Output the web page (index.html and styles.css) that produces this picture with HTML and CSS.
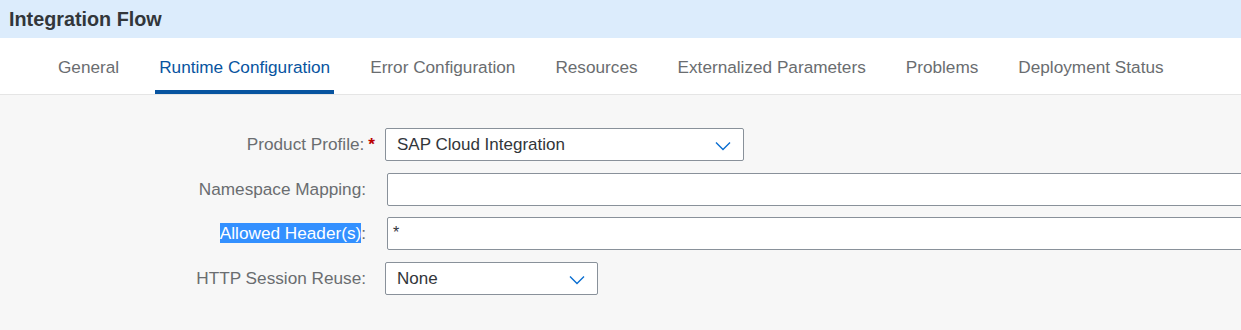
FILE: index.html
```html
<!DOCTYPE html>
<html>
<head>
<meta charset="utf-8">
<link rel="stylesheet" href="styles.css">
</head>
<body>
<div class="page">
  <header class="titlebar"><h1 class="title">Integration Flow</h1></header>
  <nav class="tabs">
    <div class="tab">General</div>
    <div class="tab active">Runtime Configuration</div>
    <div class="tab">Error Configuration</div>
    <div class="tab">Resources</div>
    <div class="tab">Externalized Parameters</div>
    <div class="tab">Problems</div>
    <div class="tab">Deployment Status</div>
  </nav>
  <main class="content">
    <div class="form">
      <label class="lbl req">Product Profile:<span class="star">*</span></label>
      <div class="select wide"><span>SAP Cloud Integration</span><svg class="chev" viewBox="0 0 16 10" width="16" height="10"><path d="M1 1.5 L8 8.5 L15 1.5" fill="none" stroke="#0a6ed1" stroke-width="1.4"/></svg></div>

      <label class="lbl">Namespace Mapping:</label>
      <div class="input"></div>

      <label class="lbl"><span class="sel">Allowed Header(s)</span>:</label>
      <div class="input"><span class="ast">*</span></div>

      <label class="lbl">HTTP Session Reuse:</label>
      <div class="select narrow"><span>None</span><svg class="chev" viewBox="0 0 16 10" width="16" height="10"><path d="M1 1.5 L8 8.5 L15 1.5" fill="none" stroke="#0a6ed1" stroke-width="1.4"/></svg></div>
    </div>
  </main>
</div>
</body>
</html>
```
FILE: styles.css
```css
html, body {
  margin: 0;
  padding: 0;
  width: 1241px;
  height: 330px;
  overflow: hidden;
  background: #f7f7f7;
  font-family: "Liberation Sans", Arial, sans-serif;
}
.page {
  display: flex;
  flex-direction: column;
  height: 330px;
}
.titlebar {
  height: 38px;
  background: #dcecfc;
  display: flex;
  align-items: center;
  padding-left: 9px;
}
.title {
  margin: 0;
  font-size: 19.8px;
  font-weight: bold;
  color: #32363a;
}
.tabs {
  height: 56px;
  background: #fff;
  border-bottom: 1px solid #e5e5e5;
  display: flex;
  gap: 32px;
  padding-left: 54px;
}
.tab {
  padding: 6px 4px 0;
  display: flex;
  align-items: center;
  font-size: 17.2px;
  color: #6a6d70;
  border-bottom: 4px solid transparent;
}
.tab.active {
  color: #0854a0;
  border-bottom-color: #0854a0;
  border-radius: 2px 2px 0 0;
}
.content {
  flex: 1;
  padding-top: 33px;
}
.form {
  display: grid;
  grid-template-columns: 366px 1fr;
  grid-template-rows: 33px 33px 33px 33px;
  column-gap: 19px;
  row-gap: 11.7px;
  align-items: center;
}
.lbl {
  text-align: right;
  font-size: 17.2px;
  color: #6a6d70;
}
.lbl.req {
  margin-right: -9px;
}
.star {
  color: #bb0000;
  margin-left: 4px;
  font-weight: bold;
}
.sel {
  background: #3390ff;
  color: #fff;
}
.select, .input {
  height: 31px;
  border: 1px solid #89919a;
  border-radius: 2px;
  background: #fff;
  box-sizing: content-box;
  display: flex;
  align-items: center;
  font-size: 17px;
  color: #32363a;
}
.select {
  justify-content: space-between;
  padding: 0 12px 0 11px;
}
.select.wide { width: 334px; }
.select.narrow { width: 188px; }
.chev { margin-top: 2px; }
.input {
  margin-left: 2px;
  margin-right: -20px;
  padding-left: 5px;
}
.ast {
  font-size: 16px;
  color: #32363a;
  align-self: flex-start;
  margin-top: 6px;
}
```
